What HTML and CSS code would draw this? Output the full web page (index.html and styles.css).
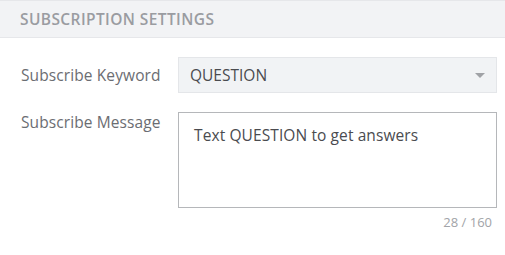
FILE: index.html
```html
<!DOCTYPE html>
<html>
<head>
    <link rel="stylesheet" href="styles.css">
</head>
<body>
<div class="panel">
    <div class="panel-head">Subscription Settings</div>
    <div class="panel-body">
        <div class="row">
            <label class="row-label">Subscribe Keyword</label>
            <div class="select">
                <span>QUESTION</span>
                <span class="caret"></span>
            </div>
        </div>
        <div class="row row-top">
            <label class="row-label">Subscribe Message</label>
            <div class="field">
                <div class="textarea">Text QUESTION to get answers</div>
                <div class="counter">28 / 160</div>
            </div>
        </div>
    </div>
</div>
</body>
</html>
```

FILE: styles.css
```css
body {
    margin: 0;
    background: #fff;
    font-family: "Open Sans", "Liberation Sans", sans-serif;
}

.panel-head {
    height: 36px;
    line-height: 37px;
    padding-left: 20px;
    background-color: #f2f3f5;
    border-top: 1px solid #e6e7ea;
    border-bottom: 1px solid #e6e7ea;
    color: #9a9ca1;
    font-size: 15.5px;
    font-weight: 600;
    letter-spacing: 0.4px;
    text-transform: uppercase;
}

.panel-body {
    padding: 19px 8px 0 21px;
}

.row {
    display: flex;
    align-items: center;
    margin-bottom: 19px;
}
.row-top {
    align-items: flex-start;
}

.row-label {
    width: 157px;
    color: #6b6d72;
    font-size: 15.5px;
    letter-spacing: 0.1px;
}
.row-top .row-label {
    margin-top: -1px;
}

.select {
    flex: 1;
    height: 34px;
    display: flex;
    align-items: center;
    justify-content: space-between;
    padding: 0 11px;
    background-color: #f1f3f5;
    border: 1px solid #e4e6e9;
    color: #4a4b4f;
    font-size: 15.5px;
}
.caret {
    width: 0;
    height: 0;
    border-left: 5px solid transparent;
    border-right: 5px solid transparent;
    border-top: 5px solid #a0a2a6;
}

.field {
    flex: 1;
}
.textarea {
    height: 96px;
    box-sizing: border-box;
    padding: 11px 15px;
    border: 1px solid #b5b7ba;
    color: #4a4b4f;
    font-size: 15.5px;
    letter-spacing: 0.1px;
}
.counter {
    margin-top: 5px;
    text-align: right;
    padding-right: 5px;
    color: #a2a4a8;
    font-size: 13px;
}
```
